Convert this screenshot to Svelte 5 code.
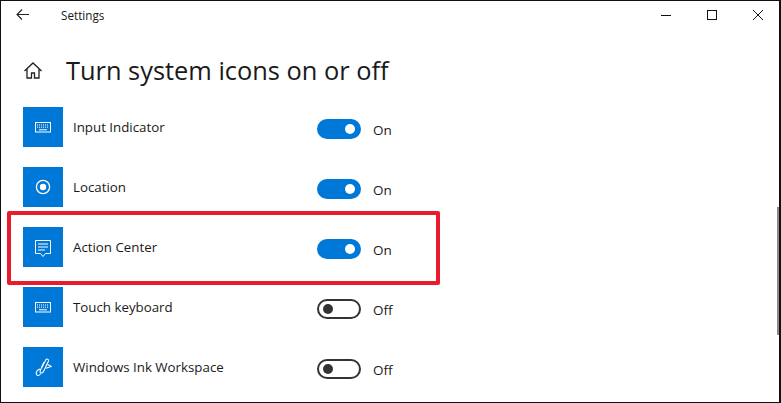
<script>
  const rows = [
    { label: 'Input Indicator', icon: 'keyboard', on: true },
    { label: 'Location', icon: 'location', on: true },
    { label: 'Action Center', icon: 'action', on: true },
    { label: 'Touch keyboard', icon: 'keyboard', on: false },
    { label: 'Windows Ink Workspace', icon: 'ink', on: false }
  ];
</script>

<div class="window">
  <header class="titlebar">
    <svg class="back" width="14" height="12" viewBox="0 0 14 12" fill="none" stroke="#222" stroke-width="1.1">
      <path d="M13 5.500H1M6 .5 1 5.500l5 5" />
    </svg>
    <span class="app-name">Settings</span>
    <div class="controls">
      <svg width="12" height="12" viewBox="0 0 12 12" stroke="#111" fill="none"><path d="M1 6.500h10" /></svg>
      <svg width="12" height="12" viewBox="0 0 12 12" stroke="#111" fill="none"><rect x="1.500" y="1.500" width="9" height="9" /></svg>
      <svg width="12" height="12" viewBox="0 0 12 12" stroke="#111" fill="none"><path d="M1 1l10 10M11 1 1 11" /></svg>
    </div>
  </header>

  <div class="page-head">
    <svg class="home" width="20" height="20" viewBox="0 0 20 20" fill="none" stroke="#222" stroke-width="1.300">
      <path d="M1.500 10 10 2l8.500 8M4 8v9h4.500v-5h3v5H16V8" />
    </svg>
    <h1>Turn system icons on or off</h1>
  </div>

  <ul class="list">
    {#each rows as row}
      <li class="row">
        <span class="tile">
          {#if row.icon === 'keyboard'}
            <svg width="16" height="11" viewBox="0 0 16 11" fill="none" stroke="#fff">
              <rect x="0.500" y="0.500" width="15" height="9.500" />
              <path d="M2 3h12M2 5.200h12" stroke-dasharray="1 1" />
              <path d="M4 7.800h8" />
            </svg>
          {:else if row.icon === 'location'}
            <svg width="16" height="16" viewBox="0 0 16 16" fill="none" stroke="#fff" stroke-width="1.300">
              <circle cx="8" cy="8" r="6.600" />
              <circle cx="8" cy="8" r="3.200" fill="#fff" stroke="none" />
            </svg>
          {:else if row.icon === 'action'}
            <svg class="action-icon" width="16" height="18" viewBox="0 0 16 18" fill="none" stroke="#fff">
              <path d="M.5.500h15v13H10.500L8 16.500 5.500 13.500H.5z" />
              <path d="M3 4h10M3 7h10M3 10h7" />
            </svg>
          {:else}
            <svg width="17" height="19" viewBox="0 0 17 19" fill="none" stroke="#fff" stroke-width="1.100">
              <path d="M11 1.500c1.500-1.200 3 .2 2.400 1.800L8.500 13.500c-1 1.700-3 2-3.300 1-.3-1 .3-2.700 1-4z" />
              <path d="M9 4 6.500 9.500M12.500 6.500c1.500.5 3 1.200 3.700 2-1 .4-3 1-5 1.800M5 11c-2 .7-3.800 2.600-3.800 4.500S3.500 18.500 5.500 16" />
            </svg>
          {/if}
        </span>
        <span class="label">{row.label}</span>
        <span class="switch" class:on={row.on}><span class="knob"></span></span>
        <span class="state">{row.on ? 'On' : 'Off'}</span>
      </li>
    {/each}
  </ul>

  <div class="highlight"></div>
  <div class="scrollbar"></div>
</div>

<style>
  :global(body) {
    margin: 0;
    background: #fff;
  }
  .window {
    position: relative;
    box-sizing: border-box;
    width: 781px;
    height: 403px;
    overflow: hidden;
    background: #fff;
    border: solid #111;
    border-width: 1px 2px 1px 1px;
    font-family: "Open Sans", "Noto Sans", sans-serif;
    color: #1a1a1a;
  }
  .titlebar {
    display: flex;
    align-items: center;
    height: 28px;
    padding-left: 15px;
  }
  .back {
    flex: none;
    margin-right: 31px;
  }
  .app-name {
    font-size: 11.700px;
  }
  .controls {
    display: flex;
    gap: 34px;
    margin-left: auto;
    margin-right: 15px;
  }
  .page-head {
    display: flex;
    align-items: center;
    gap: 23px;
    height: 44px;
    margin-top: 19px;
    padding-left: 22px;
  }
  .home {
    flex: none;
    margin-top: 2px;
  }
  h1 {
    margin: 0;
    font-size: 25.400px;
    font-weight: 400;
    white-space: nowrap;
  }
  .list {
    display: flex;
    flex-direction: column;
    gap: 20px;
    margin: 15px 0 0;
    padding: 0 0 0 22px;
    list-style: none;
  }
  .row {
    display: flex;
    align-items: center;
    height: 40px;
  }
  .tile {
    display: flex;
    flex: none;
    align-items: center;
    justify-content: center;
    width: 40px;
    height: 40px;
    background: #0078d7;
  }
  .action-icon {
    margin-top: 3px;
  }
  .label {
    width: 244px;
    margin-left: 10px;
    font-size: 13.300px;
    white-space: nowrap;
  }
  .switch {
    box-sizing: border-box;
    display: flex;
    flex: none;
    align-items: center;
    width: 44px;
    height: 20px;
    margin-top: 4px;
    padding: 0 4px;
    border: 2px solid #333;
    border-radius: 10px;
  }
  .knob {
    width: 10px;
    height: 10px;
    border-radius: 50%;
    background: #333;
  }
  .switch.on {
    justify-content: flex-end;
    background: #0078d7;
    border-color: #0078d7;
  }
  .switch.on .knob {
    background: #fff;
  }
  .state {
    margin-top: 6px;
    margin-left: 12px;
    font-size: 13.500px;
  }
  .highlight {
    position: absolute;
    left: 6px;
    top: 210px;
    box-sizing: border-box;
    width: 433px;
    height: 74px;
    border: 4px solid #e81c2c;
    border-radius: 2px;
  }
  .scrollbar {
    position: absolute;
    left: 776px;
    top: 206px;
    width: 2px;
    height: 128px;
    background: #8a8a8a;
  }
</style>
